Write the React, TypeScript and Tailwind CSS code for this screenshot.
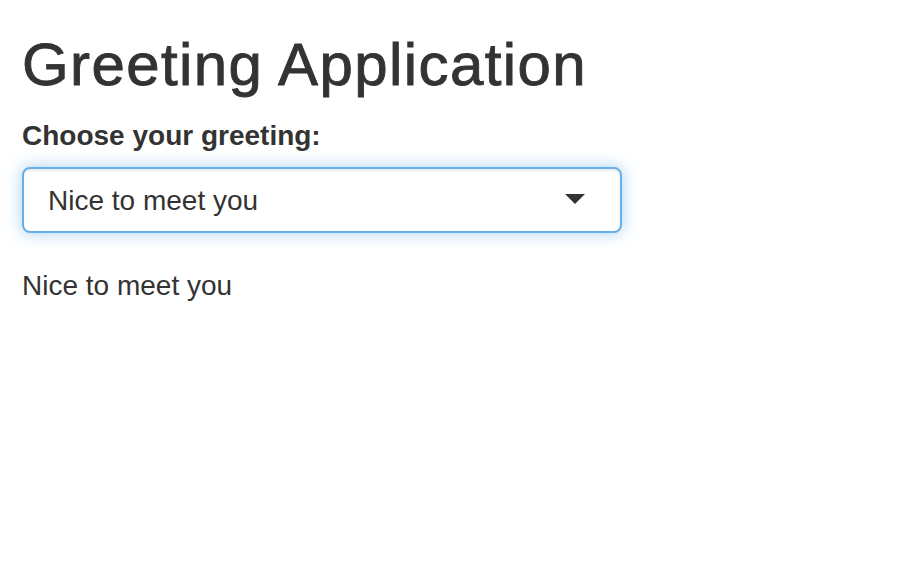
import React from 'react';

export default function App() {
  const greeting = 'Nice to meet you';

  return (
    <div className="min-h-screen bg-white px-[22px] pt-[32px] text-[#333333] font-['Liberation_Sans',Arial,sans-serif]">
      <h1 className="text-[60px] leading-[66px] font-normal tracking-[1.4px] [-webkit-text-stroke:0.9px_#333333] mb-[18px]">
        Greeting Application
      </h1>

      <div className="mb-[33px]">
        <label className="block text-[28px] leading-[40px] font-bold mb-[11px]">Choose your greeting:</label>
        <div className="flex items-center justify-between w-[600px] h-[66px] pl-[24px] pr-[35px] bg-white border-2 border-[#66afe9] rounded-[8px] shadow-[inset_0_2px_2px_rgba(0,0,0,0.075),0_0_16px_rgba(102,175,233,0.6)]">
          <span className="text-[28px] leading-[40px] mt-[2px]">{greeting}</span>
          <span className="w-0 h-0 border-x-[10px] border-x-transparent border-t-[10px] border-t-[#333333] -mt-[3px]" />
        </div>
      </div>

      <div className="text-[28px] leading-[40px]">{greeting}</div>
    </div>
  );
}
